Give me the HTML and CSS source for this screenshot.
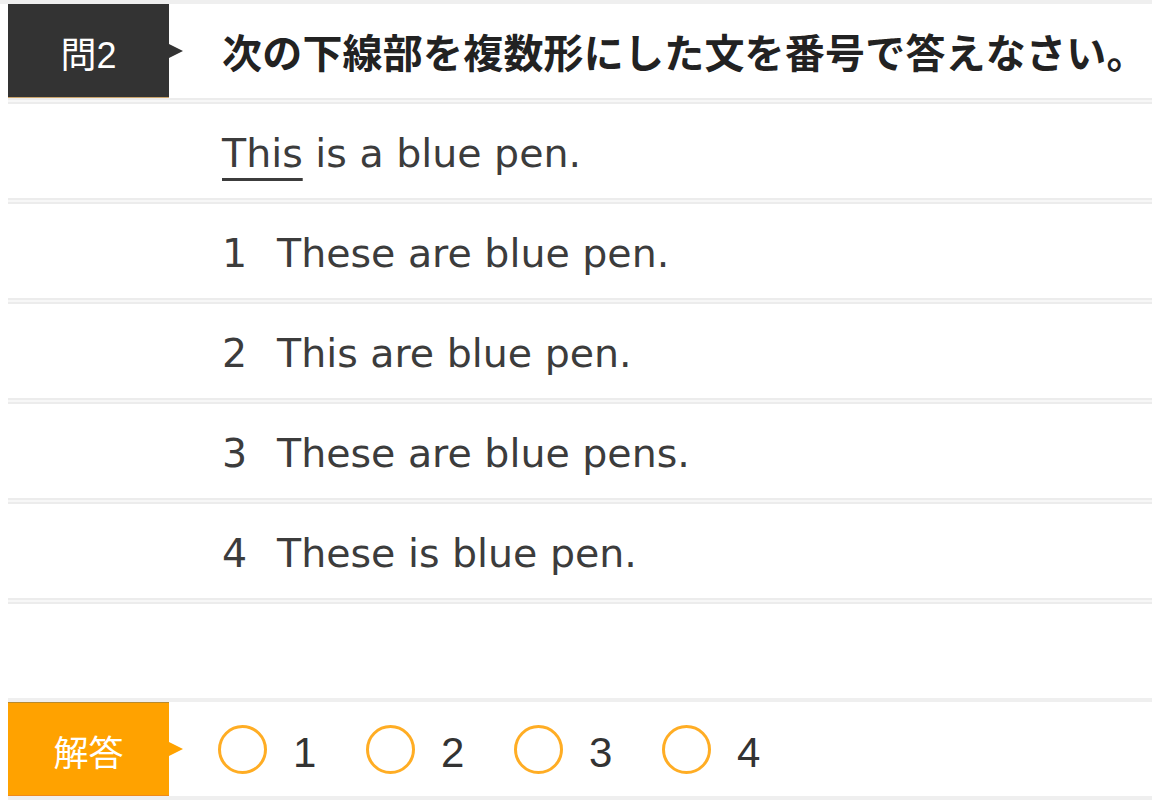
FILE: index.html
```html
<!DOCTYPE html>
<html lang="ja">
<head>
<meta charset="utf-8">
<title>問2</title>
<link rel="stylesheet" href="styles.css">
</head>
<body>
<div class="topbar"></div>
<main class="sheet">
  <div class="row head">
    <div class="tag tag-dark">問2</div>
    <div class="question">次の下線部を複数形にした文を番号で答えなさい。</div>
  </div>
  <div class="sep"></div>
  <div class="row"><div class="text"><span class="ul">This</span> is a blue pen.</div></div>
  <div class="sep"></div>
  <div class="row"><div class="text"><span class="num">1</span>These are blue pen.</div></div>
  <div class="sep"></div>
  <div class="row"><div class="text"><span class="num">2</span>This are blue pen.</div></div>
  <div class="sep"></div>
  <div class="row"><div class="text"><span class="num">3</span>These are blue pens.</div></div>
  <div class="sep"></div>
  <div class="row"><div class="text"><span class="num">4</span>These is blue pen.</div></div>
  <div class="sep"></div>
  <div class="spacer"></div>
  <div class="sep-thin"></div>
  <div class="row answer">
    <div class="tag tag-orange">解答</div>
    <div class="choices">
      <label class="choice"><span class="radio"></span><span class="label">1</span></label>
      <label class="choice"><span class="radio"></span><span class="label">2</span></label>
      <label class="choice"><span class="radio"></span><span class="label">3</span></label>
      <label class="choice"><span class="radio"></span><span class="label">4</span></label>
    </div>
  </div>
  <div class="sep-thin"></div>
</main>
</body>
</html>
```

FILE: styles.css
```css
html, body {
  margin: 0;
  padding: 0;
  background: #ffffff;
}

body {
  font-family: "DejaVu Sans", "Noto Sans CJK JP", sans-serif;
  color: #3c3c3c;
}

.topbar {
  height: 4px;
  background: #efefef;
}

.sheet {
  padding-left: 8px;
  display: flex;
  flex-direction: column;
}

.row {
  height: 94px;
  display: flex;
  align-items: center;
}

.sep {
  height: 2px;
  background: #f7f7f7;
  border-top: 2px solid #ececec;
  border-bottom: 2px solid #ececec;
}

.sep-thin {
  height: 4px;
  background: #efefef;
}

.spacer {
  height: 94px;
}

.tag {
  position: relative;
  width: 161px;
  height: 100%;
  box-sizing: border-box;
  flex: none;
  display: flex;
  align-items: center;
  justify-content: center;
  color: #ffffff;
  font-family: "Liberation Sans", "Noto Sans CJK JP", sans-serif;
  font-size: 36px;
}

.tag::after {
  content: "";
  position: absolute;
  left: 100%;
  top: 50%;
  margin-top: -7px;
  border-left: 14px solid transparent;
  border-top: 7px solid transparent;
  border-bottom: 7px solid transparent;
}

.tag-dark {
  background: #333333;
  border-bottom: 1px solid #caa46c;
  padding-top: 2px;
}

.tag-dark::after {
  border-left-color: #333333;
}

.tag-orange {
  background: #ffa200;
  border-top: 1px solid #b88a2e;
  border-bottom: 1px solid #f08a1a;
  font-size: 35px;
  padding-top: 2px;
}

.tag-orange::after {
  border-left-color: #ffa200;
}

.question {
  margin-left: 53px;
  min-width: 0;
  font-family: "Noto Sans CJK JP", sans-serif;
  font-weight: 700;
  font-size: 40px;
  letter-spacing: 0.2px;
  color: #222222;
  white-space: nowrap;
}

.text {
  padding-left: 214px;
  padding-top: 3px;
  font-size: 39.5px;
  white-space: nowrap;
  color: #3c3c3c;
}

.ul {
  text-decoration: underline;
  text-decoration-thickness: 3px;
  text-underline-offset: 11px;
}

.num {
  display: inline-block;
  width: 55px;
}

.choices {
  margin-left: 49px;
  display: flex;
  align-items: center;
}

.choice {
  width: 148px;
  display: flex;
  align-items: center;
}

.radio {
  width: 49px;
  height: 49px;
  box-sizing: border-box;
  border: 3px solid #ffad24;
  border-radius: 50%;
  flex: none;
}

.label {
  margin-left: 26px;
  padding-top: 7px;
  font-family: "Liberation Sans", sans-serif;
  font-size: 42px;
  color: #333333;
}
```
